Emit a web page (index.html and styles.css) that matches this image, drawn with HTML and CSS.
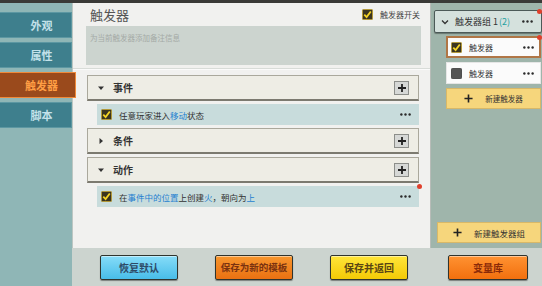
FILE: index.html
```html
<!DOCTYPE html>
<html lang="zh">
<head>
  <meta charset="UTF-8" />
  <title>触发器</title>
  <link rel="stylesheet" href="styles.css">
</head>
<body>

<div class="app">
  <aside class="sidebar">
    <div class="tab">外观</div>
    <div class="tab">属性</div>
    <div class="tab active">触发器</div>
    <div class="tab">脚本</div>
  </aside>

  <div class="workspace">
    <div class="top">
      <section class="main">
        <div class="title-row">
          <span class="title">触发器</span>
          <label class="switch">
            <svg class="cb" viewBox="0 0 12 12"><rect x="0.5" y="0.5" width="11" height="11" rx="1" fill="#3b3520" stroke="#b89a30"/><path d="M2.5 6.2 L5 8.8 L9.6 2.8" fill="none" stroke="#f6d424" stroke-width="2"/></svg>
            触发器开关
          </label>
        </div>
        <div class="note">为当前触发器添加备注信息</div>
        <div class="sep"></div>

        <div class="blocks">
          <div class="head">
            <svg class="tri" viewBox="0 0 6 6"><path d="M0 1.5 L6 1.5 L3 5 Z" fill="#333"/></svg>
            <span>事件</span>
            <span class="plus"><svg viewBox="0 0 10 10"><path d="M5 1 V9 M1 5 H9" stroke="#222" stroke-width="1.8"/></svg></span>
          </div>
          <div class="item">
            <svg class="cb" viewBox="0 0 12 12"><rect x="0.5" y="0.5" width="11" height="11" rx="1" fill="#3b3520" stroke="#b89a30"/><path d="M2.5 6.2 L5 8.8 L9.6 2.8" fill="none" stroke="#f6d424" stroke-width="2"/></svg>
            <span class="txt">任意玩家进入<b>移动</b>状态</span>
            <svg class="more" viewBox="0 0 12 3"><circle cx="1.5" cy="1.5" r="1.3"/><circle cx="6" cy="1.5" r="1.3"/><circle cx="10.5" cy="1.5" r="1.3"/></svg>
          </div>

          <div class="head">
            <svg class="tri" viewBox="0 0 6 6"><path d="M1.5 0 L5 3 L1.5 6 Z" fill="#333"/></svg>
            <span>条件</span>
            <span class="plus"><svg viewBox="0 0 10 10"><path d="M5 1 V9 M1 5 H9" stroke="#222" stroke-width="1.8"/></svg></span>
          </div>

          <div class="head">
            <svg class="tri" viewBox="0 0 6 6"><path d="M0 1.5 L6 1.5 L3 5 Z" fill="#333"/></svg>
            <span>动作</span>
            <span class="plus"><svg viewBox="0 0 10 10"><path d="M5 1 V9 M1 5 H9" stroke="#222" stroke-width="1.8"/></svg></span>
          </div>
          <div class="item">
            <svg class="cb" viewBox="0 0 12 12"><rect x="0.5" y="0.5" width="11" height="11" rx="1" fill="#3b3520" stroke="#b89a30"/><path d="M2.5 6.2 L5 8.8 L9.6 2.8" fill="none" stroke="#f6d424" stroke-width="2"/></svg>
            <span class="txt">在<b>事件中的位置</b>上创建<b>火</b>，朝向为<b>上</b></span>
            <svg class="more" viewBox="0 0 12 3"><circle cx="1.5" cy="1.5" r="1.3"/><circle cx="6" cy="1.5" r="1.3"/><circle cx="10.5" cy="1.5" r="1.3"/></svg>
            <span class="dot"></span>
          </div>
        </div>
      </section>

      <section class="groups">
        <div class="group-head">
          <svg class="chev" viewBox="0 0 8 6"><path d="M1 1.5 L4 4.5 L7 1.5" fill="none" stroke="#333" stroke-width="1.3"/></svg>
          <span>触发器组 1</span><span class="count">(2)</span>
          <svg class="more" viewBox="0 0 12 3"><circle cx="1.5" cy="1.5" r="1.3"/><circle cx="6" cy="1.5" r="1.3"/><circle cx="10.5" cy="1.5" r="1.3"/></svg>
          <span class="dot"></span>
        </div>
        <div class="trig selected">
          <svg class="cb" viewBox="0 0 12 12"><rect x="0.5" y="0.5" width="11" height="11" rx="1" fill="#3b3520" stroke="#b89a30"/><path d="M2.5 6.2 L5 8.8 L9.6 2.8" fill="none" stroke="#f6d424" stroke-width="2"/></svg>
          <span>触发器</span>
          <svg class="more" viewBox="0 0 12 3"><circle cx="1.5" cy="1.5" r="1.3"/><circle cx="6" cy="1.5" r="1.3"/><circle cx="10.5" cy="1.5" r="1.3"/></svg>
          <span class="dot"></span>
        </div>
        <div class="trig">
          <svg class="cb" viewBox="0 0 12 12"><rect x="0.5" y="0.5" width="11" height="11" rx="1" fill="#555" stroke="#444"/></svg>
          <span>触发器</span>
          <svg class="more" viewBox="0 0 12 3"><circle cx="1.5" cy="1.5" r="1.3"/><circle cx="6" cy="1.5" r="1.3"/><circle cx="10.5" cy="1.5" r="1.3"/></svg>
        </div>
        <div class="add">
          <svg viewBox="0 0 10 10"><path d="M5 0.5 V9.5 M0.5 5 H9.5" stroke="#222" stroke-width="1.8"/></svg>
          新建触发器
        </div>
        <div class="add add-group">
          <svg viewBox="0 0 10 10"><path d="M5 0.5 V9.5 M0.5 5 H9.5" stroke="#222" stroke-width="1.8"/></svg>
          新建触发器组
        </div>
      </section>
    </div>

    <div class="bottombar">
      <div class="btn blue">恢复默认</div>
      <div class="btn orange">保存为新的模板</div>
      <div class="btn yellow">保存并返回</div>
      <div class="btn orange2">变量库</div>
    </div>
  </div>
</div>

</body>
</html>
```

FILE: styles.css
```css
html, body {
  margin: 0;
  padding: 0;
}
body {
  width: 542px;
  height: 286px;
  overflow: hidden;
  background: #3a3a37;
  font-family: "Noto Sans CJK SC", "Noto Sans", sans-serif;
  color: #333;
}
.app {
  display: flex;
  margin-top: 3px;
  height: 283px;
}
.sidebar {
  width: 72px;
  flex: none;
  background: #8fb6b6;
  padding-top: 9px;
  position: relative;
  z-index: 2;
}
.tab {
  height: 24px;
  margin-bottom: 4px;
  background: #3e7f8d;
  border: 1px solid #5c97a2;
  border-left: none;
  color: #c4e2ea;
  font-size: 11px;
  font-weight: bold;
  line-height: 24px;
  text-align: center;
  padding-left: 12px;
}
.tab.active {
  background: #9a4a1c;
  border: 1px solid #f08a3a;
  border-left: none;
  color: #ff9e44;
  margin-right: -4px;
  padding-left: 8px;
}
.workspace {
  flex: 1;
  display: flex;
  flex-direction: column;
}
.top {
  display: flex;
  height: 245px;
}
.main {
  width: 357px;
  flex: none;
  background: #f1f1ef;
  border-left: 1px solid #bcc6c2;
  border-right: 1px solid #b8bcb8;
}
.title-row {
  display: flex;
  align-items: center;
  justify-content: space-between;
  height: 20px;
  padding: 1px 10px 0 17px;
}
.title {
  font-size: 13px;
  color: #555;
}
.switch {
  display: flex;
  align-items: center;
  gap: 7px;
  font-size: 8px;
  color: #444;
}
.cb {
  width: 11px;
  height: 11px;
  flex: none;
}
.note {
  margin: 2px 9px 0 13px;
  height: 39px;
  background: #ccd4cf;
  font-size: 7.5px;
  color: #a4aaa6;
  padding: 6px 0 0 4px;
  box-sizing: border-box;
}
.sep {
  margin-top: 3px;
  border-top: 1px solid #d8dcd8;
  border-bottom: 1px solid #fafafa;
}
.blocks {
  padding: 5px 11px 0 14px;
}
.head {
  display: flex;
  align-items: center;
  height: 23px;
  background: #eeede5;
  border: 1px solid #aaa89c;
  border-bottom: 2px solid #7c7a70;
  font-size: 10px;
  font-weight: bold;
  color: #333;
  padding: 0 9px 0 10px;
  margin-bottom: 3px;
}
.tri {
  width: 6px;
  height: 6px;
  margin-right: 9px;
}
.plus {
  margin-left: auto;
  width: 13px;
  height: 12px;
  background: #d6d8d6;
  border: 1px solid #8c8e8a;
  display: flex;
  align-items: center;
  justify-content: center;
}
.plus svg {
  width: 10px;
  height: 10px;
}
.item {
  position: relative;
  display: flex;
  align-items: center;
  height: 21px;
  margin: 0 0 3px 10px;
  background: #c8dcdc;
  padding: 0 8px 0 4px;
  font-size: 8.5px;
  color: #333;
}
.item .txt {
  margin-left: 7px;
}
.item .txt b {
  font-weight: normal;
  color: #1f7fd0;
}
.more {
  margin-left: auto;
  width: 11px;
  height: 3px;
  fill: #2a2a2a;
  flex: none;
}
.dot {
  position: absolute;
  width: 5px;
  height: 5px;
  border-radius: 50%;
  background: #e0402c;
  top: -2px;
  right: -3px;
}
.groups {
  flex: 1;
  background: #9fb5ab;
  display: flex;
  flex-direction: column;
  padding: 7px 0 5px 3px;
}
.group-head {
  position: relative;
  display: flex;
  align-items: center;
  height: 21px;
  background: #d5e1dd;
  border: 1px solid #4c5a58;
  border-radius: 2px;
  box-shadow: 0 1px 1px rgba(0,0,0,0.35);
  font-size: 9px;
  padding: 0 8px 0 6px;
  margin-bottom: 3px;
}
.chev {
  width: 8px;
  height: 6px;
  margin-right: 6px;
}
.count {
  color: #1ea0a0;
  margin-left: 1px;
}
.group-head .dot {
  right: -1px;
  top: -2px;
}
.trig {
  position: relative;
  display: flex;
  align-items: center;
  height: 20px;
  margin: 0 1px 4px 12px;
  background: #fbfbfb;
  border: 1px solid #e6e6e6;
  font-size: 8px;
  padding: 0 6px 0 4px;
}
.trig span:first-of-type {
  margin-left: 7px;
}
.trig.selected {
  border: 2px solid #b07646;
  height: 18px;
  padding-left: 3px;
  padding-right: 5px;
}
.trig .dot {
  right: -3px;
  top: -3px;
}
.add {
  display: flex;
  align-items: center;
  justify-content: center;
  gap: 12px;
  height: 19px;
  margin: 0 1px 0 12px;
  background: #f6d67c;
  border: 1px solid #d8b868;
  font-size: 7.5px;
  color: #333;
}
.add svg {
  width: 9px;
  height: 9px;
}
.add-group {
  margin: auto 1px 0 3px;
  font-size: 8.5px;
}
.bottombar {
  flex: 1;
  background: #ccd4cf;
  display: flex;
  align-items: center;
  gap: 37px;
  padding: 1px 0 0 28px;
}
.btn {
  width: 76px;
  height: 23px;
  border: 1px solid #2f342e;
  border-radius: 2px;
  box-shadow: 0 1px 1px rgba(0,0,0,0.4), inset 0 1px 0 rgba(255,255,255,0.5);
  font-size: 10px;
  font-weight: bold;
  line-height: 23px;
  text-align: center;
}
.blue {
  background: linear-gradient(#86dcf8, #48bde9);
  color: #2e4a66;
}
.orange {
  background: linear-gradient(#f7962e, #ea7112);
  color: #7a3210;
  font-size: 9.5px;
}
.yellow {
  background: linear-gradient(#ffe53a, #f3ca06);
  color: #5a4614;
}
.orange2 {
  background: linear-gradient(#ff9232, #f2700e);
  color: #8a2a08;
  margin-left: 3px;
  width: 78px;
}
```
